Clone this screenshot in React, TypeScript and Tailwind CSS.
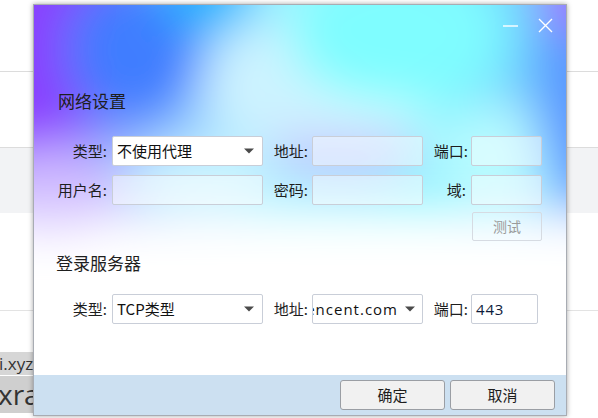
import React from 'react';

const font = "font-['Noto_Sans_CJK_SC',sans-serif]";
const latin = "font-['Open_Sans','Noto_Sans_CJK_SC',sans-serif]";

const Arrow: React.FC = () => (
    <svg width="10" height="6" viewBox="0 0 10 6" className="shrink-0">
        <path d="M0 0.5 L10 0.5 L5 5.5 Z" fill="#4a4a4a" />
    </svg>
);

const Label: React.FC<{ text: string; className: string }> = ({ text, className }) => (
    <div className={`text-right text-[15px] leading-[20px] text-[#1e1e1e] ${className}`}>{text}</div>
);

const Field: React.FC<{ className: string; children?: React.ReactNode }> = ({ className, children }) => (
    <div className={`h-[30px] border border-[#c9ced8] rounded-[2px] flex items-center ${className}`}>{children}</div>
);

// soft colour wash behind the dialog content
const DialogBackdrop: React.FC = () => (
    <svg className="absolute inset-0" width="534" height="412" viewBox="0 0 534 412">
        <defs>
            <filter id="soft" x="-30%" y="-30%" width="160%" height="160%">
                <feGaussianBlur stdDeviation="24" />
            </filter>
            <linearGradient id="band" x1="0" y1="0" x2="1" y2="0">
                <stop offset="0" stopColor="#7466ff" />
                <stop offset="0.45" stopColor="#a4f4ff" />
                <stop offset="0.7" stopColor="#86f8ff" />
                <stop offset="1" stopColor="#5b9dff" />
            </linearGradient>
            <linearGradient id="fade" x1="0" y1="0" x2="0" y2="1">
                <stop offset="0" stopColor="#ffffff" stopOpacity="0" />
                <stop offset="1" stopColor="#ffffff" stopOpacity="1" />
            </linearGradient>
        </defs>
        <rect width="534" height="412" fill="#ffffff" />
        <g filter="url(#soft)">
            <rect x="-60" y="-60" width="654" height="270" fill="url(#band)" />
            <ellipse cx="-10" cy="20" rx="110" ry="130" fill="#8a40ff" />
            <ellipse cx="100" cy="45" rx="70" ry="75" fill="#3f7dff" />
            <ellipse cx="175" cy="-10" rx="50" ry="35" fill="#05b2ff" />
            <ellipse cx="15" cy="185" rx="75" ry="45" fill="#cdb8ff" />
            <ellipse cx="160" cy="172" rx="75" ry="28" fill="#cff7ff" />
            <ellipse cx="250" cy="80" rx="80" ry="65" fill="#cdf3ff" />
            <ellipse cx="365" cy="30" rx="110" ry="70" fill="#7ffdff" />
            <ellipse cx="470" cy="150" rx="70" ry="50" fill="#b8fbff" />
            <ellipse cx="560" cy="90" rx="60" ry="120" fill="#5a97ff" />
            <ellipse cx="545" cy="-10" rx="40" ry="35" fill="#a46bff" />
            <ellipse cx="310" cy="150" rx="80" ry="28" fill="#c2c9ff" />
            <ellipse cx="330" cy="112" rx="70" ry="14" fill="#dafcff" />
            <rect x="-60" y="185" width="654" height="70" fill="url(#fade)" />
            <rect x="-60" y="250" width="654" height="230" fill="#ffffff" />
        </g>
    </svg>
);

const App: React.FC = () => {
    return (
        <div className={`relative w-[598px] h-[418px] overflow-hidden bg-white ${font}`}>
            {/* page behind the dialog */}
            <div className="h-[72px] border-b border-[#dcdcdc]" />
            <div className="h-[76px] border-b border-[#dcdcdc]" />
            <div className="h-[65px] bg-[#f2f3f5]" />
            <div className="h-[98px] border-b border-[#e3e3e3]" />
            <div className="h-[41px]" />
            <div className="w-[120px] h-[23px] bg-[#d6d6d6] text-[17px] leading-[23px] text-[#333] font-['Open_Sans',sans-serif] -indent-[1px] overflow-hidden whitespace-nowrap">i.xyz/</div>
            <div className="w-[120px] h-[37px] mt-[1px] bg-[#cfcfcf] text-[28px] leading-[36px] text-[#333] font-['Open_Sans',sans-serif] -indent-[2px] overflow-hidden whitespace-nowrap">xra</div>

            {/* dialog */}
            <div className="absolute left-[33px] top-[4px] w-[534px] h-[412px] border border-[#a8acb3] shadow-[0_0_5px_rgba(0,0,0,0.35)] overflow-hidden">
                <DialogBackdrop />
                <div className="relative h-full flex flex-col">
                    <div className="h-[40px] flex items-center justify-end gap-[20px] pr-[13px]">
                        <svg width="15" height="15" viewBox="0 0 15 15">
                            <path d="M0 8 H15" stroke="#ffffff" strokeWidth="1.4" />
                        </svg>
                        <svg width="15" height="15" viewBox="0 0 15 15">
                            <path d="M1 1 L14 14 M14 1 L1 14" stroke="#ffffff" strokeWidth="1.4" />
                        </svg>
                    </div>

                    <div className="mt-[44px] pl-[24px] text-[17px] leading-[24px] text-[#1e1e1e]">网络设置</div>

                    <div className="mt-[23px] flex items-center">
                        <Label text="类型:" className="w-[78px] pr-[5px]" />
                        <Field className="w-[151px] bg-white pl-[4px] pr-[8px] justify-between">
                            <span className="text-[15px] leading-[20px] text-[#111]">不使用代理</span>
                            <Arrow />
                        </Field>
                        <Label text="地址:" className="w-[49px] pr-[4px]" />
                        <Field className="w-[111px] bg-white/45" />
                        <Label text="端口:" className="w-[48px] pr-[3px]" />
                        <Field className="w-[71px] bg-white/45" />
                    </div>

                    <div className="mt-[9px] flex items-center">
                        <Label text="用户名:" className="w-[78px] pr-[5px]" />
                        <Field className="w-[151px] bg-white/45" />
                        <Label text="密码:" className="w-[49px] pr-[4px]" />
                        <Field className="w-[111px] bg-white/45" />
                        <Label text="域:" className="w-[48px] pr-[5px]" />
                        <Field className="w-[71px] bg-white/45" />
                    </div>

                    <div className="mt-[7px] flex pl-[438px]">
                        <div className="w-[70px] h-[29px] border border-[#d6dbe2] rounded-[2px] flex items-center justify-center text-[14px] text-[#9a9a9a]">测试</div>
                    </div>

                    <div className="mt-[10px] pl-[22px] text-[17px] leading-[24px] text-[#1e1e1e]">登录服务器</div>

                    <div className="mt-[19px] flex items-center">
                        <Label text="类型:" className="w-[78px] pr-[5px]" />
                        <Field className="w-[151px] bg-white pl-[4px] pr-[8px] justify-between">
                            <span className="text-[15px] leading-[20px] text-[#111]">TCP类型</span>
                            <Arrow />
                        </Field>
                        <Label text="地址:" className="w-[49px] pr-[4px]" />
                        <Field className="w-[111px] bg-white pr-[7px]">
                            <div className="flex-1 overflow-hidden flex justify-end pr-[7px]">
                                <span className={`text-[15px] leading-[20px] tracking-[1px] text-[#111] whitespace-nowrap ${latin}`}>qq.tencent.com</span>
                            </div>
                            <Arrow />
                        </Field>
                        <Label text="端口:" className="w-[48px] pr-[3px]" />
                        <Field className="w-[67px] bg-white pl-[4px]">
                            <span className={`text-[15px] leading-[20px] tracking-[0.8px] text-[#0d1b3a] ${latin}`}>443</span>
                        </Field>
                    </div>

                    <div className="mt-auto h-[40px] bg-[#cce0f1] flex justify-end gap-[5px] pr-[11px] pt-[5px]">
                        <button className="w-[105px] h-[30px] border border-[#9a9ea4] rounded-[3px] bg-[#f1f1f1] text-[15px] text-[#1e1e1e]">确定</button>
                        <button className="w-[105px] h-[30px] border border-[#9a9ea4] rounded-[3px] bg-[#f1f1f1] text-[15px] text-[#1e1e1e]">取消</button>
                    </div>
                </div>
            </div>
        </div>
    );
};

export default App;
